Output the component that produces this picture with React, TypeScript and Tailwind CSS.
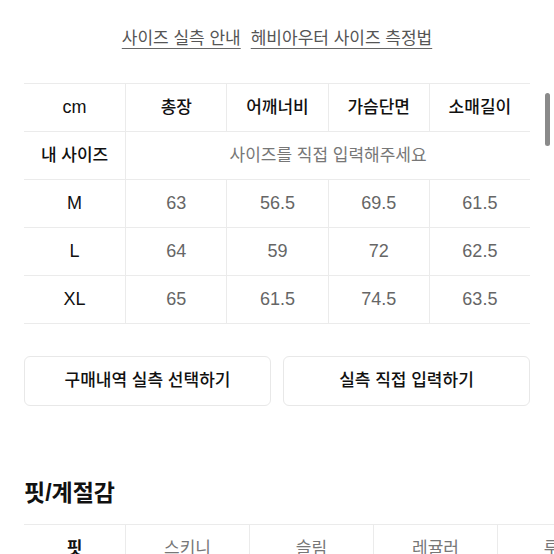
import React from "react";

const headers = ["총장", "어깨너비", "가슴단면", "소매길이"];

const sizes = [
  { name: "M", values: ["63", "56.5", "69.5", "61.5"] },
  { name: "L", values: ["64", "59", "72", "62.5"] },
  { name: "XL", values: ["65", "61.5", "74.5", "63.5"] },
];

const fits = ["스키니", "슬림", "레귤러", "루즈"];

function SizeTable() {
  return (
    <div className="mx-6 mt-8 border-b border-[#ebebeb]">
      <div className="grid h-12 grid-cols-5 border-t border-[#ebebeb]">
        <div className="flex items-center justify-center text-[18px] text-[#111]">
          cm
        </div>
        {headers.map((h) => (
          <div
            key={h}
            className="flex items-center justify-center border-l border-[#ebebeb] text-[17px] font-medium text-[#111]"
          >
            {h}
          </div>
        ))}
      </div>

      <div className="grid h-12 grid-cols-5 border-t border-[#ebebeb]">
        <div className="flex items-center justify-center text-[17px] font-medium text-[#111]">
          내 사이즈
        </div>
        <div className="col-span-4 flex items-center justify-center border-l border-[#ebebeb] text-[17px] text-[#777]">
          사이즈를 직접 입력해주세요
        </div>
      </div>

      {sizes.map((s) => (
        <div
          key={s.name}
          className="grid h-12 grid-cols-5 border-t border-[#ebebeb]"
        >
          <div className="flex items-center justify-center text-[18px] font-medium text-[#111]">
            {s.name}
          </div>
          {s.values.map((v, i) => (
            <div
              key={i}
              className="flex items-center justify-center border-l border-[#ebebeb] text-[18px] text-[#666]"
            >
              {v}
            </div>
          ))}
        </div>
      ))}
    </div>
  );
}

export default function App() {
  return (
    <div
      className="relative h-[554px] w-[554px] overflow-hidden bg-white"
      style={{
        fontFamily: '"Liberation Sans", "Noto Sans CJK KR", sans-serif',
      }}
    >
      {/* top links */}
      <div className="flex justify-center gap-[10px] pt-[27px] text-[17px] leading-6 text-[#555]">
        <span className="underline underline-offset-[4px] decoration-[#666]">
          사이즈 실측 안내
        </span>
        <span className="underline underline-offset-[4px] decoration-[#666]">
          헤비아우터 사이즈 측정법
        </span>
      </div>

      <SizeTable />

      {/* buttons */}
      <div className="mx-6 mt-8 grid grid-cols-2 gap-3">
        <button className="h-[50px] rounded-md border border-[#e8e8e8] text-[17px] font-medium text-[#111]">
          구매내역 실측 선택하기
        </button>
        <button className="h-[50px] rounded-md border border-[#e8e8e8] text-[17px] font-medium text-[#111]">
          실측 직접 입력하기
        </button>
      </div>

      {/* fit / season */}
      <h2 className="ml-6 mt-[72px] text-[23px] font-bold leading-[30px] text-[#111]">
        핏/계절감
      </h2>

      <div className="ml-6 mt-4 flex border-t border-[#ebebeb]">
        <div className="flex h-12 w-[101px] shrink-0 items-center justify-center text-[17px] font-bold text-[#111]">
          핏
        </div>
        {fits.map((f) => (
          <div
            key={f}
            className="flex h-12 w-[124px] shrink-0 items-center justify-center border-l border-[#ebebeb] text-[17px] text-[#777]"
          >
            {f}
          </div>
        ))}
      </div>

      {/* scrollbar thumb */}
      <div className="absolute left-[545px] top-[93px] h-[53px] w-[5px] rounded-full bg-[#8a8a8a]" />
    </div>
  );
}
